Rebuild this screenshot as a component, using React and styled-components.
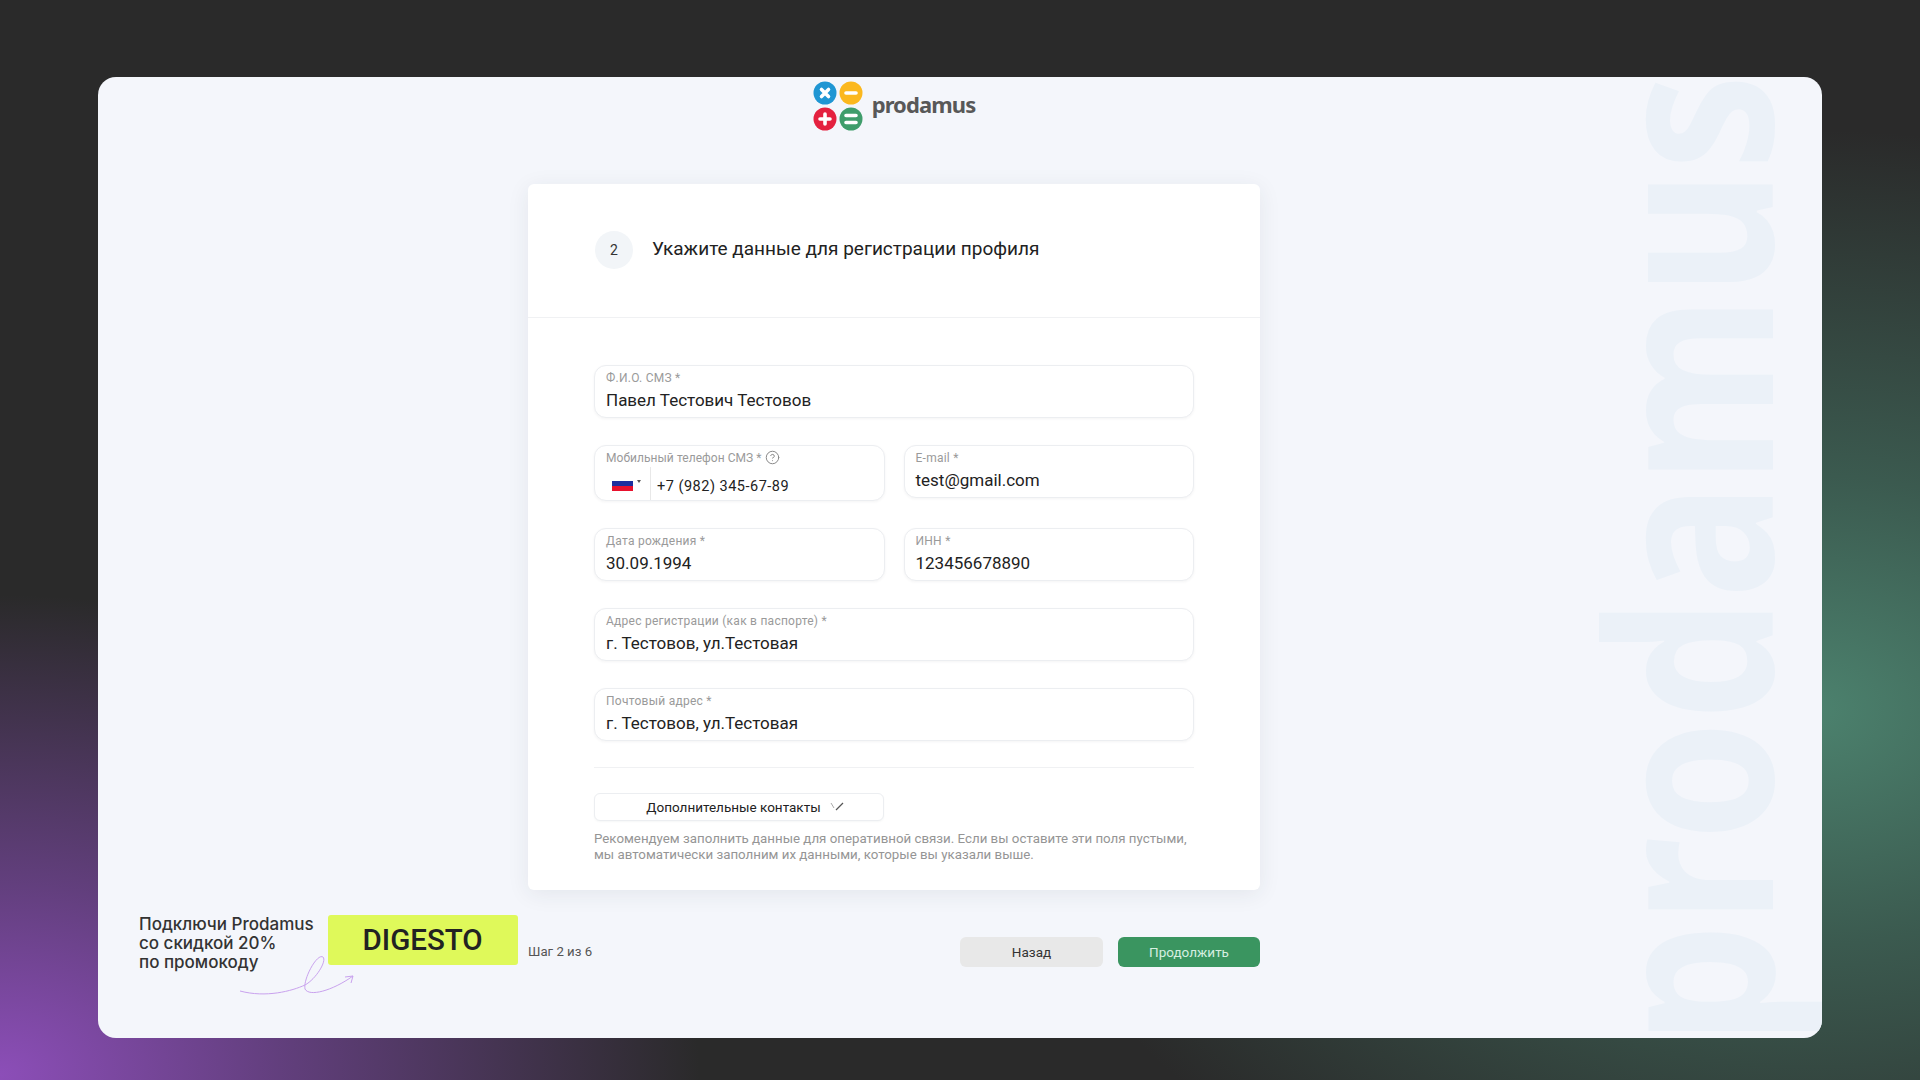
import React from "react";
import styled, { createGlobalStyle } from "styled-components";
import { CircleHelp } from "lucide-react";

const GlobalStyle = createGlobalStyle`
  html, body {
    margin: 0;
    padding: 0;
    background: #2a2a2a;
  }
  * {
    box-sizing: border-box;
  }
`;

const FIELD_ROWS = [
  [{ label: "Ф.И.О. СМЗ", value: "Павел Тестович Тестовов" }],
  [
    { label: "Мобильный телефон СМЗ", phone: "+7 (982) 345-67-89" },
    { label: "E-mail", value: "test@gmail.com" },
  ],
  [
    { label: "Дата рождения", value: "30.09.1994" },
    { label: "ИНН", value: "123456678890" },
  ],
  [{ label: "Адрес регистрации (как в паспорте)", value: "г. Тестовов, ул.Тестовая" }],
  [{ label: "Почтовый адрес", value: "г. Тестовов, ул.Тестовая" }],
];

const LogoMark = () => (
  <svg width="50" height="50" viewBox="0 0 50 50">
    <circle cx="12" cy="12" r="11.5" fill="#1f96d3" />
    <path d="M8.5 8.5l7 7M15.5 8.5l-7 7" stroke="#fff" strokeWidth="3.6" strokeLinecap="round" />
    <circle cx="38" cy="12" r="11.5" fill="#fbb81e" />
    <path d="M33 12h10" stroke="#fff" strokeWidth="3.6" strokeLinecap="round" />
    <circle cx="12" cy="38" r="11.5" fill="#e4213f" />
    <path d="M7 38h10M12 33v10" stroke="#fff" strokeWidth="3.6" strokeLinecap="round" />
    <circle cx="38" cy="38" r="11.5" fill="#3f9d6b" />
    <path d="M33 34.5h10M33 41.5h10" stroke="#fff" strokeWidth="3.6" strokeLinecap="round" />
  </svg>
);

const FlagIcon = () => (
  <svg width="21" height="15" viewBox="0 0 21 15">
    <rect width="21" height="5" fill="#fff" />
    <rect y="5" width="21" height="5" fill="#1c2f9e" />
    <rect y="10" width="21" height="5" fill="#e8112d" />
  </svg>
);

const Chevron = () => (
  <svg width="14" height="10" viewBox="0 0 14 10">
    <path d="M1 1l3 5" stroke="#aaa" strokeWidth="1" fill="none" />
    <path d="M6 8l7-7" stroke="#555" strokeWidth="1.2" fill="none" />
  </svg>
);

const PromoArrow = () => (
  <svg width="122" height="44" viewBox="0 0 122 44" fill="none">
    <path
      d="M4 38C30 45 56 38 69 32C80 26 91 8 87 4C81 0 67 26 69 36C73 44 96 38 117 23"
      stroke="#c9a2ee"
      strokeWidth="1"
    />
    <path d="M109 24L117 23L115 30" stroke="#c9a2ee" strokeWidth="1" />
  </svg>
);

const TextField = ({ label, value, phone }) => (
  <Field $tall={Boolean(phone)}>
    <FieldLabel $tight={Boolean(phone)}>
      {label} *
      {phone && <CircleHelp size={15} strokeWidth={1.6} color="#8a8a8a" />}
    </FieldLabel>
    {phone ? (
      <PhoneLine>
        <CountryPicker>
          <FlagIcon />
          <Caret />
        </CountryPicker>
        <PhoneValue>{phone}</PhoneValue>
      </PhoneLine>
    ) : (
      <FieldValue>{value}</FieldValue>
    )}
  </Field>
);

export default function App() {
  return (
    <Page>
      <GlobalStyle />
      <Panel>
        <Watermark>prodamus</Watermark>
        <LogoRow>
          <LogoMark />
          <LogoText>prodamus</LogoText>
        </LogoRow>
        <Card>
          <CardHeader>
            <StepBadge>2</StepBadge>
            <CardTitle>Укажите данные для регистрации профиля</CardTitle>
          </CardHeader>
          <Form>
            {FIELD_ROWS.map((row) => (
              <FieldRow key={row[0].label} $columns={row.length}>
                {row.map((field) => (
                  <TextField key={field.label} {...field} />
                ))}
              </FieldRow>
            ))}
            <Separator />
            <ExtraWrap>
              <ExtraButton>
                Дополнительные контакты
                <Chevron />
              </ExtraButton>
              <Note>
                Рекомендуем заполнить данные для оперативной связи. Если вы оставите эти поля пустыми,
                <br />
                мы автоматически заполним их данными, которые вы указали выше.
              </Note>
            </ExtraWrap>
          </Form>
        </Card>
        <Promo>
          <PromoText>
            Подключи Prodamus
            <br />
            со скидкой 20%
            <br />
            по промокоду
          </PromoText>
          <PromoCode>DIGESTO</PromoCode>
          <ArrowSlot>
            <PromoArrow />
          </ArrowSlot>
        </Promo>
        <Footer>
          <StepText>Шаг 2 из 6</StepText>
          <Actions>
            <BackButton>Назад</BackButton>
            <NextButton>Продолжить</NextButton>
          </Actions>
        </Footer>
      </Panel>
    </Page>
  );
}

const Page = styled.div`
  width: 1920px;
  height: 1080px;
  padding: 77px 98px 42px;
  overflow: hidden;
  font-family: Roboto, "Liberation Sans", sans-serif;
  background:
    radial-gradient(ellipse 820px 580px at 1810px 710px, rgba(76, 130, 110, 1) 0%, rgba(64, 104, 90, 0.78) 40%, rgba(42, 42, 42, 0) 100%),
    radial-gradient(ellipse 700px 480px at 0px 1075px, rgba(140, 78, 184, 1) 0%, rgba(112, 68, 146, 0.8) 40%, rgba(42, 42, 42, 0) 100%),
    #2a2a2a;
`;

const Panel = styled.div`
  position: relative;
  height: 961px;
  overflow: hidden;
  border-radius: 18px;
  background: #f4f6fb;
  display: grid;
  grid-template-columns: 430px 732px;
  grid-template-rows: 107px 706px 1fr;
`;

const Watermark = styled.div`
  position: absolute;
  left: 1473px;
  top: 968px;
  font-family: "Noto Sans", sans-serif;
  font-size: 228px;
  font-weight: 700;
  line-height: 1;
  color: #ebf1f8;
  white-space: nowrap;
  transform-origin: 0 0;
  transform: rotate(-90deg) scaleX(0.845);
`;

const LogoRow = styled.div`
  grid-column: 2;
  display: flex;
  align-items: flex-start;
  justify-content: center;
  gap: 9px;
  padding-top: 4px;
  position: relative;
`;

const LogoText = styled.span`
  font-family: "Noto Sans", sans-serif;
  font-size: 22px;
  font-weight: 700;
  letter-spacing: -0.9px;
  line-height: 30px;
  margin-top: 8px;
  color: #585858;
`;

const Card = styled.section`
  grid-column: 2;
  grid-row: 2;
  position: relative;
  background: #fff;
  border-radius: 6px;
  box-shadow: 0 4px 22px rgba(40, 50, 70, 0.08);
`;

const CardHeader = styled.header`
  height: 134px;
  padding: 47px 66px 0 67px;
  display: flex;
  align-items: flex-start;
  gap: 19px;
  border-bottom: 1px solid #f0f1f3;
`;

const StepBadge = styled.div`
  width: 38px;
  height: 38px;
  border-radius: 50%;
  background: #f2f5f8;
  display: flex;
  align-items: center;
  justify-content: center;
  font-size: 14px;
  color: #333;
`;

const CardTitle = styled.h1`
  margin: 7px 0 0;
  font-size: 19px;
  line-height: 22px;
  font-weight: 400;
  color: #222;
`;

const Form = styled.div`
  padding: 47px 66px 0;
  display: flex;
  flex-direction: column;
  gap: 27px;
`;

const FieldRow = styled.div`
  display: grid;
  grid-template-columns: ${(p) => (p.$columns === 2 ? "1fr 1fr" : "1fr")};
  column-gap: 19px;
  align-items: start;
`;

const Field = styled.div`
  height: ${(p) => (p.$tall ? "56px" : "53px")};
  padding: 4px 11px 0;
  border: 1px solid #eceef1;
  border-radius: 12px;
  box-shadow: 0 1px 3px rgba(30, 40, 60, 0.05);
  background: #fff;
`;

const FieldLabel = styled.div`
  height: 15px;
  display: flex;
  align-items: center;
  gap: 3px;
  font-size: 12px;
  letter-spacing: ${(p) => (p.$tight ? "0.05px" : "0.25px")};
  color: #9a9a9a;
  white-space: nowrap;
`;

const FieldValue = styled.div`
  margin-top: 4px;
  font-size: 17px;
  line-height: 22px;
  color: #222;
`;

const PhoneLine = styled.div`
  display: flex;
  align-items: stretch;
  margin: 2px 0 0 6px;
  height: 33px;
`;

const CountryPicker = styled.div`
  width: 39px;
  padding-top: 9px;
  display: flex;
  gap: 4px;
  border-right: 1px solid #e8e8e8;
`;

const Caret = styled.span`
  width: 0;
  height: 0;
  margin-top: 4px;
  border-left: 2px solid transparent;
  border-right: 2px solid transparent;
  border-top: 3px solid #555;
`;

const PhoneValue = styled.div`
  padding: 10px 0 0 6px;
  font-size: 14.5px;
  line-height: 20px;
  letter-spacing: 0.5px;
  color: #222;
`;

const Separator = styled.hr`
  width: 100%;
  height: 1px;
  margin: -1px 0 -2px;
  border: 0;
  background: #f0f1f3;
`;

const ExtraWrap = styled.div`
  display: flex;
  flex-direction: column;
  gap: 10px;
`;

const ExtraButton = styled.button`
  width: 290px;
  height: 28px;
  padding: 0 0 0 12px;
  border: 1px solid #eceef1;
  border-radius: 6px;
  background: #fff;
  box-shadow: 0 1px 2px rgba(30, 40, 60, 0.04);
  display: flex;
  align-items: center;
  justify-content: center;
  gap: 9px;
  font-family: inherit;
  font-size: 13.5px;
  font-weight: 400;
  color: #222;
`;

const Note = styled.p`
  margin: 0;
  font-size: 13.3px;
  line-height: 16px;
  color: #959595;
  white-space: nowrap;
`;

const Promo = styled.aside`
  grid-column: 1;
  grid-row: 3;
  position: relative;
  padding: 25px 0 0 41px;
  display: flex;
  align-items: flex-start;
  gap: 14px;
`;

const PromoText = styled.div`
  font-family: Inter, Roboto, sans-serif;
  font-size: 17px;
  font-weight: 500;
  line-height: 19px;
  color: #333;
  white-space: nowrap;
`;

const PromoCode = styled.div`
  width: 190px;
  height: 50px;
  border-radius: 3px;
  background: #dff95a;
  display: flex;
  align-items: center;
  justify-content: center;
  font-size: 29.5px;
  font-weight: 500;
  color: #222;
`;

const ArrowSlot = styled.div`
  position: absolute;
  left: 138px;
  top: 63px;
  line-height: 0;
`;

const Footer = styled.footer`
  grid-column: 2;
  grid-row: 3;
  padding-top: 47px;
  display: flex;
  align-items: flex-start;
  justify-content: space-between;
`;

const StepText = styled.span`
  font-size: 13.2px;
  line-height: 30px;
  color: #555;
`;

const Actions = styled.div`
  display: flex;
  gap: 15px;
`;

const BackButton = styled.button`
  width: 143px;
  height: 30px;
  border: 0;
  border-radius: 6px;
  background: #e8e8e8;
  font-family: inherit;
  font-size: 13.5px;
  font-weight: 400;
  color: #333;
`;

const NextButton = styled(BackButton)`
  width: 142px;
  background: #3a9560;
  color: #d6efe0;
`;
